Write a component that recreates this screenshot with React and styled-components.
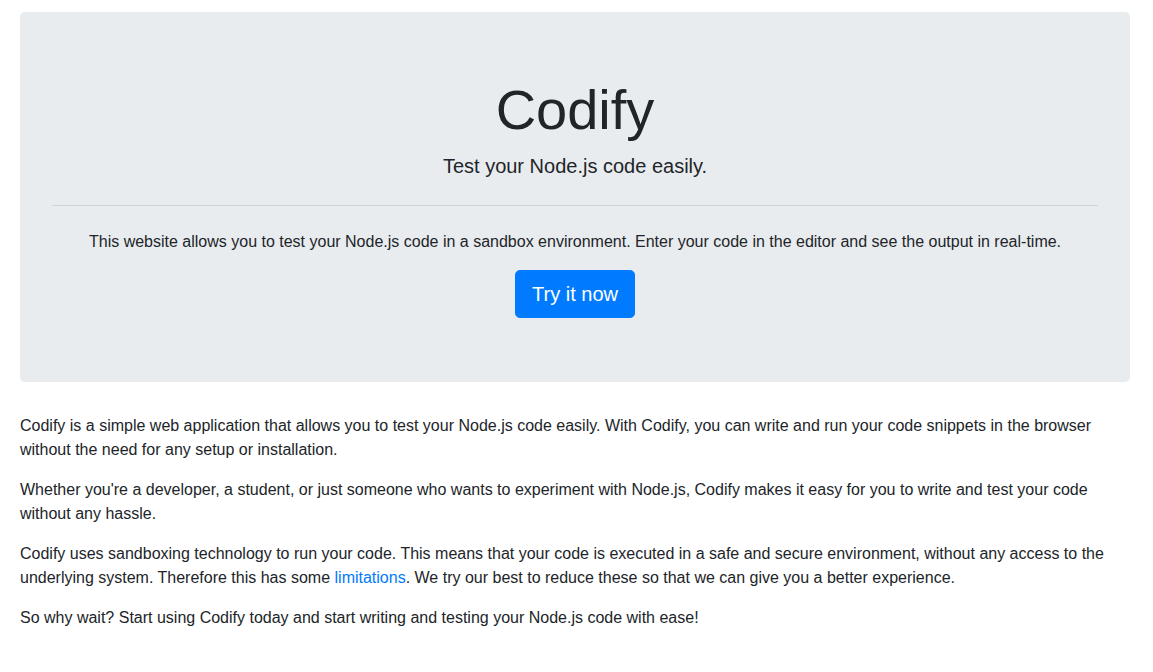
import React from 'react'
import styled, { createGlobalStyle } from 'styled-components';

const GlobalStyle = createGlobalStyle`
	*, *::before, *::after { box-sizing: border-box; }
	body {
		margin: 0;
		font-family: "Liberation Sans", Arial, sans-serif;
		font-size: 16px;
		line-height: 1.5;
		color: #212529;
		background: #fff;
	}
`;

export default function App() {
	return (
		<>
			<GlobalStyle />
			<Container>
				<Jumbotron>
					<Title>Codify</Title>
					<Lead>Test your Node.js code easily.</Lead>
					<Divider />
					<Text>This website allows you to test your Node.js code in a sandbox environment. Enter your code in the editor and see the output in real-time.</Text>
					<Button href="#">Try it now</Button>
				</Jumbotron>
				<Text $left>Codify is a simple web application that allows you to test your Node.js code easily. With Codify, you can write and run your code snippets in the browser without the need for any setup or installation.</Text>
				<Text $left>Whether you're a developer, a student, or just someone who wants to experiment with Node.js, Codify makes it easy for you to write and test your code without any hassle.</Text>
				<Text $left>Codify uses sandboxing technology to run your code. This means that your code is executed in a safe and secure environment, without any access to the underlying system. Therefore this has some <Link href="#">limitations</Link>. We try our best to reduce these so that we can give you a better experience.</Text>
				<Text $left>So why wait? Start using Codify today and start writing and testing your Node.js code with ease!</Text>
			</Container>
		</>
	)
}

const Container = styled.div`
	width: 1110px;
	margin: 12px 0 0 20px;
`;
const Jumbotron = styled.div`
	background: #e9ecef;
	border-radius: 4.8px;
	padding: 64px 32px;
	margin-bottom: 32px;
	display: flex;
	flex-direction: column;
	align-items: center;
	text-align: center;
`;
const Title = styled.h1`
	font-size: 56px;
	font-weight: 300;
	line-height: 1.2;
	margin: 0 0 8px;
`;
const Lead = styled.p`
	font-size: 20px;
	font-weight: 300;
	line-height: 30px;
	margin: 0 0 24px;
`;
const Divider = styled.hr`
	align-self: stretch;
	margin: 0 0 24px;
	border: 0;
	border-top: 1px solid rgba(0, 0, 0, 0.1);
`;
const Text = styled.p`
	margin: 0 0 16px;
	line-height: 24px;
	text-align: ${props => props.$left ? 'left' : 'center'};
`;
const Button = styled.a`
	display: inline-block;
	background: #007bff;
	color: #fff;
	border: 1px solid #007bff;
	border-radius: 4.8px;
	padding: 8px 16px;
	font-size: 20px;
	line-height: 30px;
	text-decoration: none;
`;
const Link = styled.a`
	color: #007bff;
	text-decoration: none;
`;
